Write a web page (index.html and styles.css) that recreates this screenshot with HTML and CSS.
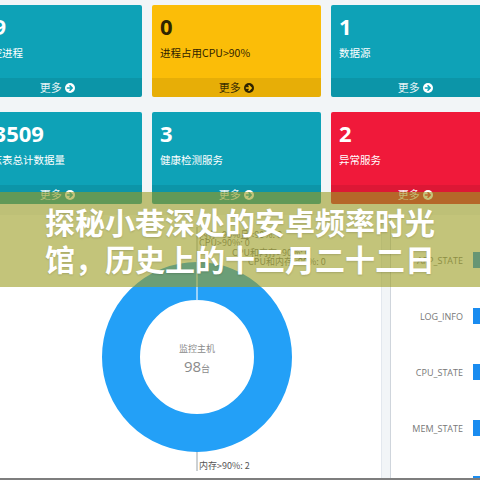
FILE: index.html
```html
<!DOCTYPE html>
<html>
<head>
    <meta charset="utf-8">
    <title>监控首页</title>
    <link rel="stylesheet" href="styles.css">
</head>
<body>
    <div class="cards">
        <div class="card teal">
            <div class="num">39</div>
            <div class="label">监控进程</div>
            <div class="more">更多 <svg class="go" viewBox="0 0 10 10"><circle cx="5" cy="5" r="5"/><path d="M2.4 5h4.6M5 2.8 7.2 5 5 7.2"/></svg></div>
        </div>
        <div class="card yellow">
            <div class="num">0</div>
            <div class="label">进程占用CPU&gt;90%</div>
            <div class="more">更多 <svg class="go" viewBox="0 0 10 10"><circle cx="5" cy="5" r="5"/><path d="M2.4 5h4.6M5 2.8 7.2 5 5 7.2"/></svg></div>
        </div>
        <div class="card teal">
            <div class="num">1</div>
            <div class="label">数据源</div>
            <div class="more">更多 <svg class="go" viewBox="0 0 10 10"><circle cx="5" cy="5" r="5"/><path d="M2.4 5h4.6M5 2.8 7.2 5 5 7.2"/></svg></div>
        </div>
        <div class="card teal">
            <div class="num">13509</div>
            <div class="label">日志表总计数据量</div>
            <div class="more">更多 <svg class="go" viewBox="0 0 10 10"><circle cx="5" cy="5" r="5"/><path d="M2.4 5h4.6M5 2.8 7.2 5 5 7.2"/></svg></div>
        </div>
        <div class="card teal">
            <div class="num">3</div>
            <div class="label">健康检测服务</div>
            <div class="more">更多 <svg class="go" viewBox="0 0 10 10"><circle cx="5" cy="5" r="5"/><path d="M2.4 5h4.6M5 2.8 7.2 5 5 7.2"/></svg></div>
        </div>
        <div class="card red">
            <div class="num">2</div>
            <div class="label">异常服务</div>
            <div class="more">更多 <svg class="go" viewBox="0 0 10 10"><circle cx="5" cy="5" r="5"/><path d="M2.4 5h4.6M5 2.8 7.2 5 5 7.2"/></svg></div>
        </div>
    </div>

    <div class="panels">
        <div class="panel chart">
            <svg width="381" height="263" viewBox="0 0 381 263">
                <!-- leader lines + labels -->
                <line x1="197" y1="12" x2="197" y2="47" class="lead"/>
                <line x1="197" y1="237" x2="197" y2="256" class="lead"/>
                <line x1="232" y1="43" x2="246" y2="43" class="lead"/>
                <text x="199" y="23" class="lbl">内存&gt;90%且&lt;90%: 0</text>
                <text x="199" y="31" class="lbl">CPU&gt;90%: 0</text>
                <text x="232" y="41" class="lbl">CPU和内存&gt;90%: 0</text>
                <text x="248" y="50" class="lbl">CPU和内存&lt;90%: 0</text>
                <!-- donut -->
                <circle cx="197" cy="142" r="76" class="ring"/>
                <line x1="197" y1="46" x2="197" y2="86" class="gap"/>
                <text x="197" y="137" class="mid">监控主机</text>
                <text x="197" y="157" class="mid big">98<tspan class="unit">台</tspan></text>
                <text x="199" y="254" class="lbl dark">内存&gt;90%: 2</text>
            </svg>
        </div>
        <div class="panel bars">
            <div class="bar-row"><span>APP_STATE</span><i></i></div>
            <div class="bar-row"><span>LOG_INFO</span><i></i></div>
            <div class="bar-row"><span>CPU_STATE</span><i></i></div>
            <div class="bar-row"><span>MEM_STATE</span><i></i></div>
            <div class="bar-row"><span>DISK_STATE</span><i></i></div>
        </div>
    </div>
    <div class="bottom-line"></div>

    <div class="banner">
        <h1>探秘小巷深处的安卓频率时光<br>馆，历史上的十二月二十二日</h1>
    </div>
</body>
</html>
```

FILE: styles.css
```css
body {
    margin: 0;
    width: 480px;
    height: 480px;
    overflow: hidden;
    position: relative;
    background: #f2f5f7;
    font-family: "Noto Sans CJK SC", sans-serif;
}

/* stat cards */
.cards {
    display: grid;
    grid-template-columns: repeat(3, 169px);
    column-gap: 10px;
    row-gap: 15px;
    margin-left: -27px;
    padding-top: 5px;
}
.card {
    height: 92px;
    border-radius: 2px;
    display: flex;
    flex-direction: column;
    color: #fff;
    overflow: hidden;
}
.teal { background: #0ea2b7; }
.yellow { background: #fbbd08; color: #2f2400; }
.red { background: #f0193a; }

.num {
    font-family: "Open Sans", sans-serif;
    font-weight: 700;
    font-size: 22px;
    line-height: 26px;
    padding: 8px 8px 0;
}
.label {
    font-size: 10.5px;
    line-height: 14px;
    margin-top: 7px;
    padding: 0 8px;
    white-space: nowrap;
}
.more {
    margin-top: auto;
    height: 19px;
    line-height: 19px;
    font-size: 11px;
    text-align: center;
    background: rgba(0, 0, 0, 0.08);
    color: rgba(255, 255, 255, 0.9);
}
.yellow .more { color: #3a2d00; }
.go {
    width: 10px;
    height: 10px;
    vertical-align: -1px;
    margin-left: 1px;
}
.go circle { fill: #fff; }
.go path { fill: none; stroke-width: 1.6; stroke-linecap: round; stroke-linejoin: round; }
.teal .go path { stroke: #0ea2b7; }
.red .go path { stroke: #f0193a; }
.yellow .go circle { fill: #2f2400; }
.yellow .go path { stroke: #fbbd08; }

/* lower panels */
.panels {
    display: flex;
    gap: 8px;
    margin-top: 11px;
    height: 263px;
}
.panel {
    background: #fff;
    overflow: hidden;
}
.chart {
    width: 381px;
    border-right: 1px solid #e3e8ee;
}
.chart svg { display: block; }
.bars {
    flex: 1;
    border-left: 1px solid #cfd5dc;
    padding-top: 37px;
    display: flex;
    flex-direction: column;
    gap: 40px;
}
.bar-row {
    display: grid;
    grid-template-columns: 72px 1fr;
    column-gap: 10px;
    align-items: center;
    height: 16px;
}
.bar-row span {
    text-align: right;
    font-family: "Open Sans", sans-serif;
    font-size: 9px;
    color: #777;
    white-space: nowrap;
}
.bar-row i {
    display: block;
    height: 16px;
    background: #1a8cf0;
}

.ring { fill: none; stroke: #23a0f7; stroke-width: 38; }
.gap { stroke: #e8f4fd; stroke-width: 1.2; }
.lead { stroke: #9aa3a8; stroke-width: 1; }
.lbl { font-size: 9px; fill: #777; }
.lbl.dark { fill: #555; }
.mid { font-size: 9px; fill: #8a8a8a; text-anchor: middle; }
.mid.big { font-size: 15px; font-family: "Open Sans", sans-serif; }
.unit { font-size: 9px; font-family: "Noto Sans CJK SC", sans-serif; }

.bottom-line {
    height: 2px;
    background: #7e7e7e;
}

/* title overlay */
.banner {
    position: absolute;
    top: 192px;
    left: 0;
    right: 0;
    height: 95px;
    background: rgba(155, 157, 33, 0.6);
    display: flex;
    align-items: center;
    justify-content: center;
}
.banner h1 {
    margin: 0;
    font-size: 30px;
    line-height: 37px;
    font-weight: 700;
    color: #fff;
    text-align: center;
    text-shadow: 0 1px 2px rgba(0, 0, 0, 0.15);
}
```
